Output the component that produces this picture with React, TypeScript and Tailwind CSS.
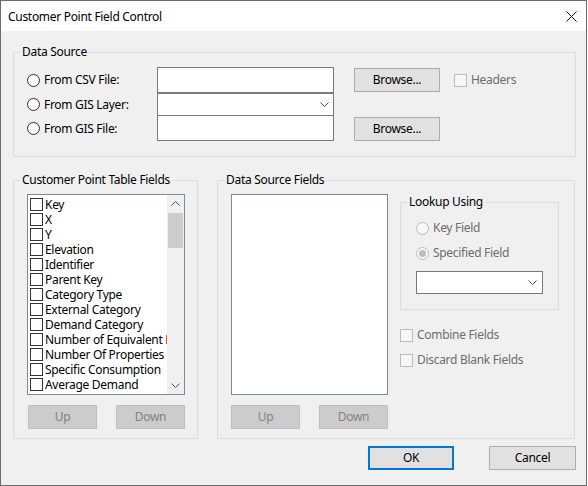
import React from 'react';

const tableFields = [
  'Key',
  'X',
  'Y',
  'Elevation',
  'Identifier',
  'Parent Key',
  'Category Type',
  'External Category',
  'Demand Category',
  'Number of Equivalent Households',
  'Number Of Properties',
  'Specific Consumption',
  'Average Demand',
];

function Chevron({ up }: { up?: boolean }) {
  return (
    <svg width="9" height="5" viewBox="0 0 9 5" className="block">
      <polyline
        points={up ? '0.5,4.5 4.5,0.5 8.5,4.5' : '0.5,0.5 4.5,4.5 8.5,0.5'}
        fill="none"
        stroke="#505050"
        strokeWidth="1"
      />
    </svg>
  );
}

function Radio({ label, disabled, checked }: { label: string; disabled?: boolean; checked?: boolean }) {
  return (
    <div className="flex items-center gap-[4px]">
      <span
        className={`w-[13px] h-[13px] rounded-full border flex items-center justify-center ${
          disabled ? 'border-[#bcbcbc] bg-[#f7f7f7]' : 'border-[#333333] bg-white'
        }`}
      >
        {checked && <span className="w-[7px] h-[7px] rounded-full bg-[#bcbcbc]" />}
      </span>
      <span className={disabled ? 'text-[#6d6d6d]' : 'text-black'}>{label}</span>
    </div>
  );
}

function Check({ label, disabled }: { label: string; disabled?: boolean }) {
  return (
    <div className="flex items-center gap-[4px]">
      <span
        className={`w-[13px] h-[13px] border ${disabled ? 'border-[#bcbcbc] bg-[#f7f7f7]' : 'border-[#333333] bg-white'}`}
      />
      <span className={disabled ? 'text-[#6d6d6d]' : 'text-black'}>{label}</span>
    </div>
  );
}

function Button({ children, disabled, width = 'w-[86px]', primary }: { children: React.ReactNode; disabled?: boolean; width?: string; primary?: boolean }) {
  let cls = 'bg-[#e1e1e1] border border-[#adadad] text-black';
  if (disabled) cls = 'bg-[#cccccc] border border-[#bfbfbf] text-[#838383]';
  if (primary) cls = 'bg-[#e1e1e1] border-2 border-[#0078d7] text-black';
  return (
    <button className={`${width} h-[24px] flex items-center justify-center leading-none ${cls}`}>{children}</button>
  );
}

function Legend({ children }: { children: React.ReactNode }) {
  return <legend className="ml-[6px] px-[2px] leading-[16px] text-black">{children}</legend>;
}

export default function App() {
  return (
    <div className="w-[587px] h-[486px] border border-[#6b6b6b] bg-[#f0f0f0] flex flex-col text-[12px] tracking-[-0.3px] font-['Noto_Sans',sans-serif] text-black overflow-hidden">
      {/* title bar */}
      <div className="h-[30px] bg-white flex items-center justify-between pl-[7px] pr-[9px] shrink-0">
        <span className="leading-none mt-[1px]">Customer Point Field Control</span>
        <svg width="11" height="11" viewBox="0 0 11 11">
          <path d="M0.5 0.5 L10.5 10.5 M10.5 0.5 L0.5 10.5" stroke="#111" strokeWidth="1" />
        </svg>
      </div>

      <div className="pt-[13px] pl-[12px] pr-[10px] flex flex-col">
        {/* Data Source */}
        <fieldset className="w-[563px] border border-[#dcdcdc]">
          <Legend>Data Source</Legend>
          <div className="flex pl-[13px] pt-[7px] pb-[15px]">
            <div className="w-[130px] flex flex-col">
              <div className="h-[26px] flex items-center"><Radio label="From CSV File:" /></div>
              <div className="h-[23px] flex items-center"><Radio label="From GIS Layer:" /></div>
              <div className="h-[25px] flex items-center"><Radio label="From GIS File:" /></div>
            </div>
            <div className="w-[177px] flex flex-col">
              <div className="h-[26px] bg-white border border-[#7a7a7a]" />
              <div className="h-[23px] bg-white border border-[#7a7a7a] flex items-center justify-end pr-[4px]">
                <Chevron />
              </div>
              <div className="h-[25px] bg-white border border-t-0 border-[#7a7a7a]" />
            </div>
            <div className="ml-[20px] flex flex-col">
              <div className="h-[26px] flex items-center">
                <Button>Browse...</Button>
                <div className="ml-[14px]"><Check label="Headers" disabled /></div>
              </div>
              <div className="h-[23px]" />
              <div className="h-[25px] flex items-center">
                <Button>Browse...</Button>
              </div>
            </div>
          </div>
        </fieldset>

        <div className="mt-[15px] flex gap-[19px]">
          {/* Customer Point Table Fields */}
          <fieldset className="w-[185px] border border-[#dcdcdc]">
            <Legend>Customer Point Table Fields</Legend>
            <div className="pl-[13px] pt-[6px] pb-[9px]">
              <div className="w-[158px] h-[201px] bg-white border border-[#828790] flex overflow-hidden">
                <div className="flex-1 min-w-0 flex flex-col pl-[2px] pt-[2px] overflow-hidden">
                  {tableFields.map(f => (
                    <div key={f} className="h-[15px] shrink-0 flex items-center gap-[2px] whitespace-nowrap">
                      <span className="w-[13px] h-[13px] shrink-0 border border-[#333333] bg-white" />
                      <span className="leading-[15px]">{f}</span>
                    </div>
                  ))}
                </div>
                <div className="w-[17px] shrink-0 bg-[#f0f0f0] flex flex-col">
                  <div className="h-[17px] flex items-center justify-center"><Chevron up /></div>
                  <div className="mt-[1px] mx-[1px] h-[35px] bg-[#cdcdcd]" />
                  <div className="flex-1" />
                  <div className="h-[17px] flex items-center justify-center"><Chevron /></div>
                </div>
              </div>
              <div className="mt-[10px] pl-[1px] flex gap-[19px]">
                <Button disabled width="w-[69px]">Up</Button>
                <Button disabled width="w-[69px]">Down</Button>
              </div>
            </div>
          </fieldset>

          {/* Data Source Fields */}
          <fieldset className="w-[358px] border border-[#dcdcdc]">
            <Legend>Data Source Fields</Legend>
            <div className="flex items-start pl-[13px] pt-[6px] pb-[9px]">
              <div className="flex flex-col">
                <div className="w-[157px] h-[201px] bg-white border border-[#828790]" />
                <div className="mt-[10px] flex gap-[19px]">
                  <Button disabled width="w-[69px]">Up</Button>
                  <Button disabled width="w-[69px]">Down</Button>
                </div>
              </div>
              <div className="ml-[12px] flex flex-col">
                <fieldset className="w-[159px] border border-[#dcdcdc]">
                  <Legend>Lookup Using</Legend>
                  <div className="pl-[15px] pt-[8px] pb-[15px]">
                    <div className="h-[20px] flex items-center"><Radio label="Key Field" disabled /></div>
                    <div className="mt-[5px] h-[20px] flex items-center"><Radio label="Specified Field" disabled checked /></div>
                    <div className="mt-[8px] w-[127px] h-[23px] bg-white border border-[#7a7a7a] flex items-center justify-end pr-[5px]">
                      <Chevron />
                    </div>
                  </div>
                </fieldset>
                <div className="mt-[15px] h-[20px] flex items-center"><Check label="Combine Fields" disabled /></div>
                <div className="mt-[5px] h-[20px] flex items-center"><Check label="Discard Blank Fields" disabled /></div>
              </div>
            </div>
          </fieldset>
        </div>

        <div className="mt-[7px] flex justify-end gap-[35px]">
          <Button primary width="w-[86px]">OK</Button>
          <Button width="w-[87px]">Cancel</Button>
        </div>
      </div>
    </div>
  );
}
